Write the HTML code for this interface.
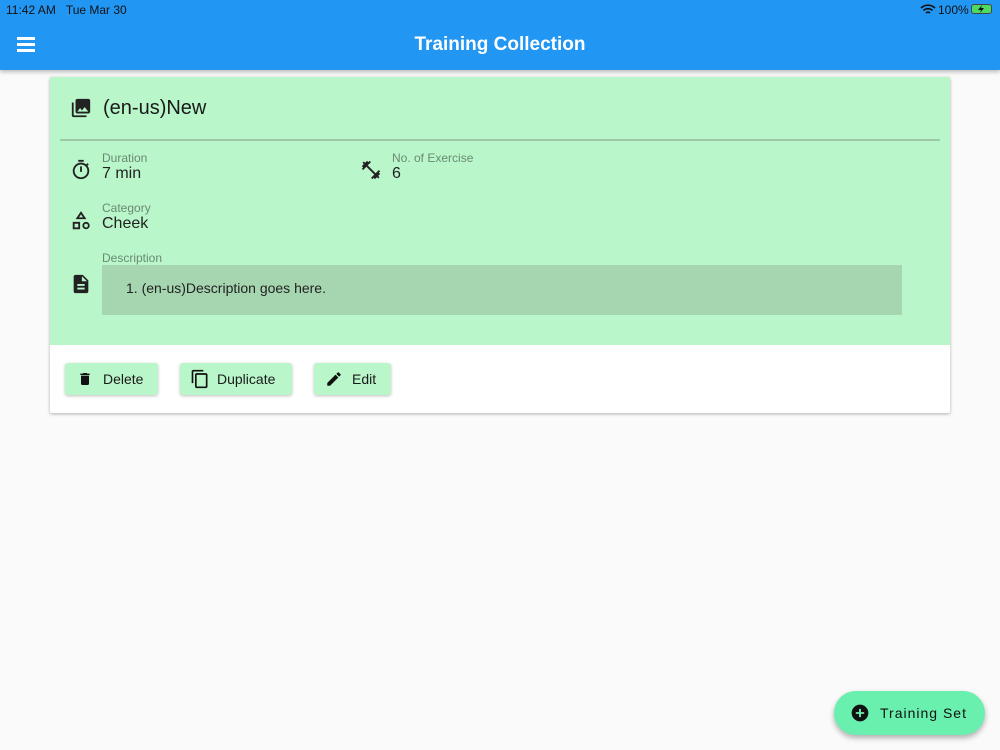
<!DOCTYPE html>
<html><head><style>
*{margin:0;padding:0;box-sizing:border-box}
body{width:1000px;height:750px;background:#fafafa;font-family:"Liberation Sans",sans-serif;position:relative;overflow:hidden;color:#1a1a1a}
.bar{position:absolute;left:0;top:0;width:1000px;height:70px;background:#2196f3;box-shadow:0 2px 4px rgba(0,0,0,.25)}
.abs{position:absolute}
.card{position:absolute;left:50px;top:77px;width:900px;height:336px;background:#fff;box-shadow:0 1px 3px rgba(0,0,0,.3);border-radius:2px}
.green{position:absolute;left:0;top:0;width:900px;height:268px;background:#b9f6ca}
.lbl{font-size:12px;color:#6b8a73}
.val{font-size:16px;color:#222}
.btn{position:absolute;top:286px;height:32px;background:#b9f6ca;border-radius:3px;box-shadow:0 1px 3px rgba(0,0,0,.25);font-size:14px;display:flex;align-items:center;font-weight:500}
</style></head><body>
<div class="bar">
<div class="abs" style="left:6px;top:3px;font-size:12px;color:#111">11:42 AM&nbsp;&nbsp;&nbsp;Tue Mar 30</div>
<div class="abs" style="left:938px;top:3px;font-size:12px;color:#111">100%</div>
<svg class="abs" style="left:920px;top:4px" width="16" height="11" viewBox="0 0 16 11"><path d="M1 4a10 10 0 0 1 14 0M3.5 6.5a6.5 6.5 0 0 1 9 0M6 9a3 3 0 0 1 4 0" stroke="#111" stroke-width="1.6" fill="none"/></svg>
<div class="abs" style="left:971px;top:4px;width:21px;height:10px;border:1px solid #444;border-radius:3px;background:#4cd964"></div>
<svg class="abs" style="left:977px;top:5px" width="9" height="8" viewBox="0 0 9 8"><path d="M5 0L1 5h3L3 8l4-5H4z" fill="#111"/></svg>
<div class="abs" style="left:17px;top:37px;width:18px;height:3px;background:#fff;box-shadow:0 6px 0 #fff,0 12px 0 #fff;top:37px"></div>
<div class="abs" style="left:0;width:1000px;top:34px;text-align:center;color:#fff;font-size:19px;font-weight:600">Training Collection</div>
</div>
<div class="card">
<div class="green">
<svg class="abs" style="left:20px;top:20px" width="22" height="22" viewBox="0 0 24 24"><path fill="#222" d="M22 16V4c0-1.1-.9-2-2-2H8c-1.1 0-2 .9-2 2v12c0 1.1.9 2 2 2h12c1.1 0 2-.9 2-2zm-11-4l2 2.7 3-3.7 4 5H8l3-4zM2 6v14c0 1.1.9 2 2 2h14v-2H4V6H2z"/></svg>
<div class="abs" style="left:53px;top:20px;font-size:20px">(en-us)New</div>
<div class="abs" style="left:10px;top:62px;width:880px;height:2px;background:#9ec9a6"></div>
<svg class="abs" style="left:20px;top:82px" width="22" height="22" viewBox="0 0 24 24"><path fill="#222" d="M15 1H9v2h6V1zm-4 13h2V8h-2v6zm8.03-6.61l1.42-1.42c-.43-.51-.9-.99-1.410-1.41l-1.42 1.42A8.96 8.96 0 0 0 12 4a9 9 0 1 0 9 9c0-2.12-.74-4.07-1.97-5.61zM12 20c-3.87 0-7-3.13-7-7s3.13-7 7-7 7 3.13 7 7-3.13 7-7 7z"/></svg>
<div class="abs lbl" style="left:52px;top:74px">Duration</div>
<div class="abs val" style="left:52px;top:88px">7 min</div>
<svg class="abs" style="left:310px;top:82px" width="22" height="22" viewBox="0 0 24 24"><path fill="#222" d="M20.57 14.86L22 13.43 20.57 12 17 15.57 8.43 7 12 3.43 10.57 2 9.14 3.43 7.71 2 5.57 4.14 4.14 2.71 2.71 4.14l1.43 1.43L2 7.71l1.43 1.43L2 10.57 3.43 12 7 8.43 15.57 17 12 20.57 13.43 22l1.43-1.43L16.290 22l2.14-2.14 1.43 1.43 1.43-1.43-1.43-1.43L22 16.29z"/></svg>
<div class="abs lbl" style="left:342px;top:74px">No. of Exercise</div>
<div class="abs val" style="left:342px;top:88px">6</div>
<svg class="abs" style="left:20px;top:133px" width="22" height="22" viewBox="0 0 24 24"><path fill="none" stroke="#222" stroke-width="2" d="M12 3l4 6H8zM4 14h6v6H4zM17.5 14a3 3 0 1 0 0 6 3 3 0 1 0 0-6z"/></svg>
<div class="abs lbl" style="left:52px;top:124px">Category</div>
<div class="abs val" style="left:52px;top:138px">Cheek</div>
<svg class="abs" style="left:20px;top:196px" width="22" height="22" viewBox="0 0 24 24"><path fill="#222" d="M14 2H6c-1.1 0-2 .9-2 2v16c0 1.1.9 2 2 2h12c1.1 0 2-.9 2-2V8l-6-6zm2 16H8v-2h8v2zm0-4H8v-2h8v2zm-3-5V3.5L18.5 9H13z"/></svg>
<div class="abs lbl" style="left:52px;top:174px">Description</div>
<div class="abs" style="left:52px;top:188px;width:800px;height:50px;background:#a5d6b0"></div>
<div class="abs" style="left:76px;top:203px;font-size:14px;color:#222">1. (en-us)Description goes here.</div>
</div>
<div class="btn" style="left:15px;width:93px"><svg style="margin-left:12px" width="16" height="18" viewBox="0 0 24 24"><path fill="#111" d="M6 19c0 1.1.9 2 2 2h8c1.1 0 2-.9 2-2V7H6v12zM19 4h-3.5l-1-1h-5l-1 1H5v2h14V4z"/></svg><span style="margin-left:10px">Delete</span></div>
<div class="btn" style="left:130px;width:112px"><svg style="margin-left:10px" width="20" height="20" viewBox="0 0 24 24"><path fill="#111" d="M16 1H4c-1.1 0-2 .9-2 2v14h2V3h12V1zm3 4H8c-1.1 0-2 .9-2 2v14c0 1.1.9 2 2 2h11c1.1 0 2-.9 2-2V7c0-1.1-.9-2-2-2zm0 16H8V7h11v14z"/></svg><span style="margin-left:7px">Duplicate</span></div>
<div class="btn" style="left:264px;width:77px"><svg style="margin-left:11px" width="18" height="18" viewBox="0 0 24 24"><path fill="#111" d="M3 17.25V21h3.75L17.81 9.94l-3.75-3.75L3 17.25zM20.71 7.04a1 1 0 0 0 0-1.41l-2.34-2.34a1 1 0 0 0-1.41 0l-1.83 1.83 3.75 3.75 1.83-1.83z"/></svg><span style="margin-left:9px">Edit</span></div>
</div>
<div class="abs" style="left:834px;top:691px;width:151px;height:44px;border-radius:22px;background:#69f0ae;box-shadow:0 3px 6px rgba(0,0,0,.3);display:flex;align-items:center">
<svg style="margin-left:16px" width="20" height="20" viewBox="0 0 24 24"><circle cx="12" cy="12" r="10" fill="#111"/><path d="M12 7v10M7 12h10" stroke="#69f0ae" stroke-width="2.2"/></svg>
<span style="margin-left:10px;font-size:14px;letter-spacing:1px;color:#111">Training Set</span></div>
</body></html>
